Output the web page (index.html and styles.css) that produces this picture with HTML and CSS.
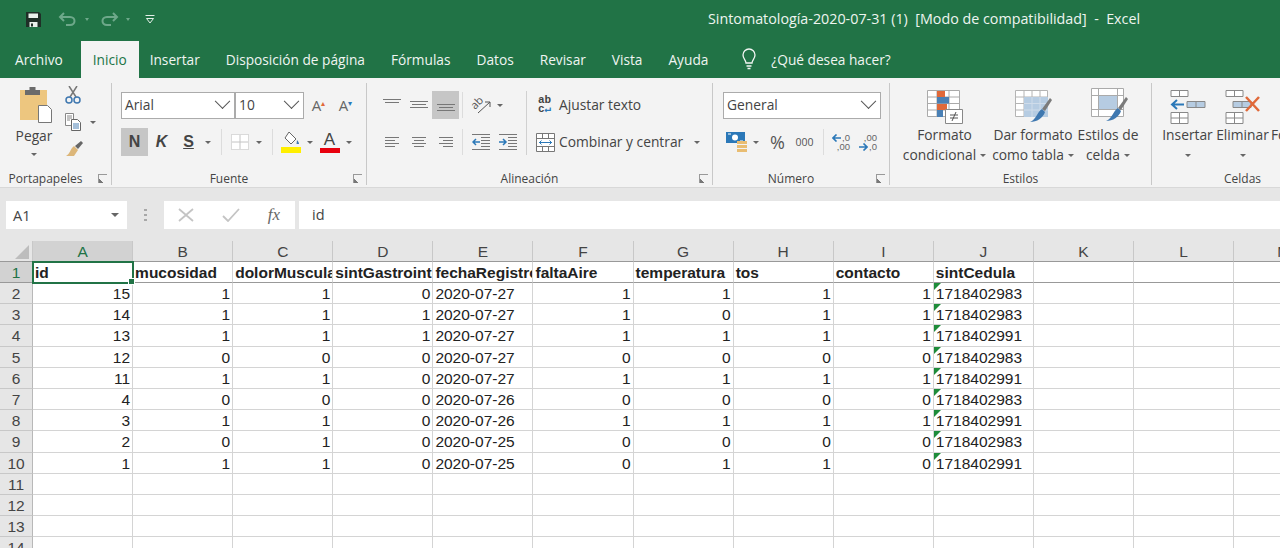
FILE: index.html
```html
<!DOCTYPE html>
<html>
<head>
  <meta charset="UTF-8">
  <title>Sintomatologia - Excel</title>
  <link rel="stylesheet" href="styles.css">
</head>
<body>
  <header class="titlebar">
    <div class="qat">
      <svg class="save" width="17" height="17" viewBox="0 0 17 17"><path d="M1 1h13l2 2v13H1z" fill="#1f2f27"/><path d="M3.500 2.500h9.500v4.500h-9.500z" fill="#e9f0eb"/><path d="M4.500 11h8v5h-8z" fill="#e9f0eb"/><path d="M6 12.500h2v3h-2z" fill="#1f2f27"/></svg>
      <svg class="undo" width="20" height="14" viewBox="0 0 20 14"><path d="M6 1L2 5l4 4M2 5h10c6 0 6 8 0 8H8" fill="none" stroke="#6ea88a" stroke-width="2"/></svg>
      <span class="qat-drop"></span>
      <svg class="redo" width="20" height="14" viewBox="0 0 20 14"><path d="M14 1l4 4-4 4M18 5H8c-6 0-6 8 0 8h4" fill="none" stroke="#6ea88a" stroke-width="2"/></svg>
      <span class="qat-drop"></span>
      <svg class="custom" width="10" height="9" viewBox="0 0 10 9"><path d="M.5.500h9M1.500 3.500h7L5 8z" fill="none" stroke="#e4efe8"/></svg>
    </div>
    <div class="doc-title">Sintomatología-2020-07-31 (1)&nbsp; [Modo de compatibilidad]&nbsp; -&nbsp; Excel</div>
  </header>

  <nav class="tabs">
    <a class="tab first">Archivo</a>
    <a class="tab active">Inicio</a>
    <a class="tab">Insertar</a>
    <a class="tab">Disposición de página</a>
    <a class="tab">Fórmulas</a>
    <a class="tab">Datos</a>
    <a class="tab">Revisar</a>
    <a class="tab">Vista</a>
    <a class="tab">Ayuda</a>
    <svg class="bulb" width="18" height="22" viewBox="0 0 18 22"><path d="M6 15c0-3-3-4-3-8a6 6 0 0 1 12 0c0 4-3 5-3 8zM6.500 18h5M7.500 20.500h3" fill="none" stroke="#f2f6f3" stroke-width="1.300"/></svg>
    <span class="tell">¿Qué desea hacer?</span>
  </nav>

  <section class="ribbon">
    <div class="group g-clip">
      <div class="body clip-body">
        <div class="paste">
          <svg width="33" height="36" viewBox="0 0 33 36"><path d="M0 3h27v30H0z" fill="#edc67f"/><path d="M5 3h4.500V0h6v3H20v5H5z" fill="#6b6b6b"/><path d="M18.500 18.500h9l4 4v13h-13z" fill="#fff" stroke="#777"/></svg>
          <span class="big-text">Pegar</span>
          <span class="drop"></span>
        </div>
        <div class="clip-tools">
          <svg width="16" height="18" viewBox="0 0 16 18"><path d="M4 0l7 11M12 0L5 11" stroke="#777" stroke-width="1.500" fill="none"/><circle cx="4" cy="14" r="3" fill="none" stroke="#3f78b0" stroke-width="1.500"/><circle cx="12" cy="14" r="3" fill="none" stroke="#3f78b0" stroke-width="1.500"/></svg>
          <div class="copy-line">
            <svg width="16" height="18" viewBox="0 0 16 18"><path d="M.5.500h8v12h-8z" fill="#fff" stroke="#888"/><path d="M2 3h5M2 5h5M2 7h3" stroke="#888"/><path d="M6.500 6.500h6l3 3v8h-9z" fill="#fff" stroke="#666"/><path d="M8 11h6M8 13h6M8 15h6" stroke="#4a80b5"/></svg>
            <span class="drop"></span>
          </div>
          <svg width="18" height="16" viewBox="0 0 18 16"><path d="M9 6l4 4-4 6H1c4-2 4-7 8-10z" fill="#dcb679"/><path d="M10 6l6-5 2 2-5 6z" fill="#666"/></svg>
        </div>
      </div>
      <div class="foot"><span class="foot-text">Portapapeles</span><span class="launch"></span></div>
    </div>

    <div class="group g-font">
      <div class="body">
        <div class="row">
          <div class="select font-name"><span>Arial</span><i class="chev"></i></div>
          <div class="select font-size"><span>10</span><i class="chev"></i></div>
          <span class="tool grow-a">A<sup>▴</sup></span>
          <span class="tool grow-a">A<sup class="blue">▾</sup></span>
        </div>
        <div class="row">
          <span class="tool bold on">N</span>
          <span class="tool bold ital">K</span>
          <span class="tool bold under">S</span>
          <span class="drop-w"><span class="drop"></span></span>
          <span class="sep"></span>
          <span class="tool"><svg width="18" height="16" viewBox="0 0 18 16"><path d="M.5.500h17v15H.500z" fill="#fff" stroke="#bbb" stroke-dasharray="1 1"/><path d="M9 1v14M1 8h16" stroke="#c4c4c4"/></svg></span>
          <span class="drop-w"><span class="drop"></span></span>
          <span class="sep"></span>
          <span class="tool"><svg width="20" height="22" viewBox="0 0 20 22"><path d="M8 1l7 7-5 5-6-6z" fill="#fff" stroke="#666"/><path d="M16 9c2 2 2 4 2 4h-2.500z" fill="#3f78b0"/><path d="M0 16h20v6H0z" fill="#ffef00"/></svg></span>
          <span class="drop-w"><span class="drop"></span></span>
          <span class="tool color-a">A</span>
          <span class="drop-w"><span class="drop"></span></span>
        </div>
      </div>
      <div class="foot"><span class="foot-text">Fuente</span><span class="launch"></span></div>
    </div>

    <div class="group g-align">
      <div class="body align-body">
        <div class="align-left">
          <div class="row">
            <span class="tool"><svg width="18" height="12" viewBox="0 0 18 12"><path d="M0 .500h18M2 3.500h14" stroke="#777"/></svg></span>
            <span class="tool"><svg width="18" height="12" viewBox="0 0 18 12"><path d="M0 2.500h18M2 5.500h14M0 8.500h18" stroke="#777"/></svg></span>
            <span class="tool on"><svg width="18" height="12" viewBox="0 0 18 12"><path d="M0 5.500h18M2 8.500h14M0 11.500h18" stroke="#777"/></svg></span>
            <span class="sep"></span>
            <span class="tool"><svg width="22" height="20" viewBox="0 0 22 20"><text class="orient" x="5" y="15" transform="rotate(-45 5 15)">ab</text><path d="M8 18L20 7M20 7v5M20 7h-5" stroke="#555" fill="none"/></svg></span>
            <span class="drop-w"><span class="drop"></span></span>
          </div>
          <div class="row">
            <span class="tool"><svg width="14" height="11" viewBox="0 0 14 11"><path d="M0 .500h14M0 3.500h10M0 6.500h14M0 9.500h10" stroke="#777"/></svg></span>
            <span class="tool"><svg width="14" height="11" viewBox="0 0 14 11"><path d="M0 .500h14M2 3.500h10M0 6.500h14M2 9.500h10" stroke="#777"/></svg></span>
            <span class="tool"><svg width="14" height="11" viewBox="0 0 14 11"><path d="M0 .500h14M4 3.500h10M0 6.500h14M4 9.500h10" stroke="#777"/></svg></span>
            <span class="sep"></span>
            <span class="tool"><svg width="18" height="16" viewBox="0 0 18 16"><path d="M0 .500h18M9 3.500h9M9 6.500h9M9 9.500h9M9 12.500h9M0 15.500h18" stroke="#777"/><path d="M8 8H1M4 5L1 8l3 3" stroke="#2b78b8" stroke-width="1.500" fill="none"/></svg></span>
            <span class="tool"><svg width="18" height="16" viewBox="0 0 18 16"><path d="M0 .500h18M9 3.500h9M9 6.500h9M9 9.500h9M9 12.500h9M0 15.500h18" stroke="#777"/><path d="M0 8h7M4 5l3 3-3 3" stroke="#2b78b8" stroke-width="1.500" fill="none"/></svg></span>
          </div>
        </div>
        <span class="sep tall"></span>
        <div class="align-right">
          <div class="row wide-row">
            <span class="wrap-ic"><b>ab</b><b>c<em>↵</em></b></span>
            <span class="label">Ajustar texto</span>
          </div>
          <div class="row wide-row">
            <span class="merge-ic"><svg width="19" height="19" viewBox="0 0 19 19"><path d="M.5.500h18v18H.500zM.5 5.500h18M.5 13.500h18M6.500.5v5M12.500.5v5M6.500 13.500v5M12.500 13.500v5" fill="#fff" stroke="#777"/><path d="M3 9.500h13M5.500 7.500l-2 2 2 2M13.500 7.500l2 2-2 2" fill="none" stroke="#2b78b8"/></svg></span>
            <span class="label">Combinar y centrar</span>
            <span class="drop-w merge-drop"><span class="drop"></span></span>
          </div>
        </div>
      </div>
      <div class="foot"><span class="foot-text">Alineación</span><span class="launch"></span></div>
    </div>

    <div class="group g-num">
      <div class="body">
        <div class="row">
          <div class="select num-format"><span>General</span><i class="chev"></i></div>
        </div>
        <div class="row">
          <span class="tool"><svg width="22" height="20" viewBox="0 0 22 20"><path d="M0 0h19v11H0z" fill="#2b78b8"/><circle cx="9" cy="5.500" r="3" fill="#fff"/><path d="M2 2h3M14 9h3" stroke="#fff"/><path d="M11 9h10v3H11zM11 13h10v3H11zM11 17h10v3H11z" fill="#e9bd72"/></svg></span>
          <span class="drop-w"><span class="drop"></span></span>
          <span class="tool percent">%</span>
          <span class="tool thousand">000</span>
          <span class="sep num-sep"></span>
          <span class="tool dec"><span class="dec-line"><svg width="9" height="8" viewBox="0 0 9 8"><path d="M9 4H1M4.500.5L1 4l3.500 3.500" fill="none" stroke="#2b78b8" stroke-width="1.600"/></svg>,0</span><span class="dec-line">,00</span></span>
          <span class="tool dec"><span class="dec-line">,00</span><span class="dec-line"><svg width="9" height="8" viewBox="0 0 9 8"><path d="M0 4h8M4.500.5L8 4 4.500 7.500" fill="none" stroke="#2b78b8" stroke-width="1.600"/></svg>,0</span></span>
        </div>
      </div>
      <div class="foot"><span class="foot-text">Número</span><span class="launch"></span></div>
    </div>

    <div class="group g-styles">
      <div class="body large-body">
        <div class="large w-cond">
          <svg width="36" height="36" viewBox="0 0 36 36"><path d="M.5.500h32v26H.500zM.5 7h32M.5 13.500h32M.5 20h32M10 .5v26M22 .5v26" fill="#fff" stroke="#aaa"/><path d="M10 1h8v6h-8zM10 14h10v6H10z" fill="#e0693a"/><path d="M10 7h12v6.500H10zM10 20h6v7h-6z" fill="#4a80b5"/><path d="M18.500 19.500h17v14h-17z" fill="#fff" stroke="#888"/><path d="M23 25h8M23 28h8M29 22l-4 9" stroke="#555" fill="none"/></svg>
          <span class="big-text">Formato</span>
          <span class="big-text">condicional<span class="drop in"></span></span>
        </div>
        <div class="large w-table">
          <svg width="37" height="36" viewBox="0 0 37 36"><path d="M.5.500h32v26H.500zM.5 7h32M.5 13.500h32M.5 20h32M9 .5v26M17 .5v26M25 .5v26" fill="#fff" stroke="#b4b4b4"/><path d="M9 7h24v20H9z" fill="#b6cce2"/><path d="M9 13.500h24M9 20h24M17 7v20M25 7v20" stroke="#cfdcea"/><path d="M27 19L35 8l2 2-7 11z" fill="#7b7b7b"/><path d="M27 19l3 3c-2 6-8 10-15 10 6-2 7-10 12-13z" fill="#3f78b0"/></svg>
          <span class="big-text">Dar formato</span>
          <span class="big-text">como tabla<span class="drop in"></span></span>
        </div>
        <div class="large w-cell">
          <svg class="cell-ic" width="38" height="36" viewBox="0 0 38 36"><path d="M.5.500h32v28H.500zM.5 7.500h32M.5 21.500h32M7.500.5v28M26.500.5v28" fill="#fff" stroke="#aaa"/><path d="M8 8h18v13H8z" fill="#b6cce2"/><path d="M27 20l8-11 2 2-7 11z" fill="#7b7b7b"/><path d="M27 20l3 3c-2 6-8 10-15 10 6-2 7-10 12-13z" fill="#3f78b0"/></svg>
          <span class="big-text">Estilos de</span>
          <span class="big-text">celda<span class="drop in"></span></span>
        </div>
      </div>
      <div class="foot"><span class="foot-text">Estilos</span></div>
    </div>

    <div class="group g-cells">
      <div class="body large-body">
        <div class="large w-ins">
          <svg width="36" height="36" viewBox="0 0 36 36"><path d="M1 .5h17v6H1zM9.500.5v6M1 22.500h17v11H1zM9.500 22.500v11M1 28h17" fill="#fff" stroke="#888"/><path d="M17 11.500h18v6H17zM26 11.500v6" fill="#b6cce2" stroke="#888"/><path d="M14 14.500H2M7 10l-5 4.500L7 19" fill="none" stroke="#2b78b8" stroke-width="2"/></svg>
          <span class="big-text">Insertar</span>
          <span class="drop"></span>
        </div>
        <div class="large w-del">
          <svg width="36" height="36" viewBox="0 0 36 36"><path d="M1 .5h17v6H1zM9.500.5v6M1 22.500h17v11H1zM9.500 22.500v11M1 28h17" fill="#fff" stroke="#888"/><path d="M8 11.500h18v6H8zM17 11.500v6" fill="#b6cce2" stroke="#888"/><path d="M21 7l13 14M34 7L21 21" stroke="#e0693a" stroke-width="2.500"/></svg>
          <span class="big-text">Eliminar</span>
          <span class="drop"></span>
        </div>
        <div class="large w-fmt"><span class="big-text cut">Formato</span></div>
      </div>
      <div class="foot cells-foot"><span class="foot-text">Celdas</span></div>
    </div>
  </section>

  <section class="formula">
    <div class="namebox"><span>A1</span><span class="drop"></span></div>
    <div class="grip"><i></i><i></i><i></i></div>
    <div class="fx-box">
      <svg width="16" height="14" viewBox="0 0 16 14"><path d="M1 1l14 12M15 1L1 13" stroke="#c4c4c4" stroke-width="1.800"/></svg>
      <svg width="18" height="14" viewBox="0 0 18 14"><path d="M1 8l5 5L17 1" fill="none" stroke="#c4c4c4" stroke-width="1.800"/></svg>
      <span class="fx">fx</span>
    </div>
    <div class="fbar">id</div>
  </section>

  <main class="sheet">
    <div class="corner"><i></i></div>
    <div class="ch sel">A</div><div class="ch">B</div><div class="ch">C</div><div class="ch">D</div><div class="ch">E</div><div class="ch">F</div><div class="ch">G</div><div class="ch">H</div><div class="ch">I</div><div class="ch">J</div><div class="ch">K</div><div class="ch">L</div><div class="ch">M</div>

    <div class="rh sel">1</div><div class="c head active-cell">id</div><div class="c head">mucosidad</div><div class="c head">dolorMuscular</div><div class="c head">sintGastrointestinal</div><div class="c head">fechaRegistro</div><div class="c head">faltaAire</div><div class="c head">temperatura</div><div class="c head">tos</div><div class="c head">contacto</div><div class="c head">sintCedula</div><div class="c head"></div><div class="c head"></div><div class="c head"></div>

    <div class="rh">2</div><div class="c n">15</div><div class="c n">1</div><div class="c n">1</div><div class="c n">0</div><div class="c">2020-07-27</div><div class="c n">1</div><div class="c n">1</div><div class="c n">1</div><div class="c n">1</div><div class="c t">1718402983</div><div class="c"></div><div class="c"></div><div class="c"></div>
    <div class="rh">3</div><div class="c n">14</div><div class="c n">1</div><div class="c n">1</div><div class="c n">1</div><div class="c">2020-07-27</div><div class="c n">1</div><div class="c n">0</div><div class="c n">1</div><div class="c n">1</div><div class="c t">1718402983</div><div class="c"></div><div class="c"></div><div class="c"></div>
    <div class="rh">4</div><div class="c n">13</div><div class="c n">1</div><div class="c n">1</div><div class="c n">1</div><div class="c">2020-07-27</div><div class="c n">1</div><div class="c n">1</div><div class="c n">1</div><div class="c n">1</div><div class="c t">1718402991</div><div class="c"></div><div class="c"></div><div class="c"></div>
    <div class="rh">5</div><div class="c n">12</div><div class="c n">0</div><div class="c n">0</div><div class="c n">0</div><div class="c">2020-07-27</div><div class="c n">0</div><div class="c n">0</div><div class="c n">0</div><div class="c n">0</div><div class="c t">1718402983</div><div class="c"></div><div class="c"></div><div class="c"></div>
    <div class="rh">6</div><div class="c n">11</div><div class="c n">1</div><div class="c n">1</div><div class="c n">0</div><div class="c">2020-07-27</div><div class="c n">1</div><div class="c n">1</div><div class="c n">1</div><div class="c n">1</div><div class="c t">1718402991</div><div class="c"></div><div class="c"></div><div class="c"></div>
    <div class="rh">7</div><div class="c n">4</div><div class="c n">0</div><div class="c n">0</div><div class="c n">0</div><div class="c">2020-07-26</div><div class="c n">0</div><div class="c n">0</div><div class="c n">0</div><div class="c n">0</div><div class="c t">1718402983</div><div class="c"></div><div class="c"></div><div class="c"></div>
    <div class="rh">8</div><div class="c n">3</div><div class="c n">1</div><div class="c n">1</div><div class="c n">0</div><div class="c">2020-07-26</div><div class="c n">1</div><div class="c n">1</div><div class="c n">1</div><div class="c n">1</div><div class="c t">1718402991</div><div class="c"></div><div class="c"></div><div class="c"></div>
    <div class="rh">9</div><div class="c n">2</div><div class="c n">0</div><div class="c n">1</div><div class="c n">0</div><div class="c">2020-07-25</div><div class="c n">0</div><div class="c n">0</div><div class="c n">0</div><div class="c n">0</div><div class="c t">1718402983</div><div class="c"></div><div class="c"></div><div class="c"></div>
    <div class="rh">10</div><div class="c n">1</div><div class="c n">1</div><div class="c n">1</div><div class="c n">0</div><div class="c">2020-07-25</div><div class="c n">0</div><div class="c n">1</div><div class="c n">1</div><div class="c n">0</div><div class="c t">1718402991</div><div class="c"></div><div class="c"></div><div class="c"></div>

    <div class="rh">11</div><div class="c"></div><div class="c"></div><div class="c"></div><div class="c"></div><div class="c"></div><div class="c"></div><div class="c"></div><div class="c"></div><div class="c"></div><div class="c"></div><div class="c"></div><div class="c"></div><div class="c"></div>
    <div class="rh">12</div><div class="c"></div><div class="c"></div><div class="c"></div><div class="c"></div><div class="c"></div><div class="c"></div><div class="c"></div><div class="c"></div><div class="c"></div><div class="c"></div><div class="c"></div><div class="c"></div><div class="c"></div>
    <div class="rh">13</div><div class="c"></div><div class="c"></div><div class="c"></div><div class="c"></div><div class="c"></div><div class="c"></div><div class="c"></div><div class="c"></div><div class="c"></div><div class="c"></div><div class="c"></div><div class="c"></div><div class="c"></div>
    <div class="rh">14</div><div class="c"></div><div class="c"></div><div class="c"></div><div class="c"></div><div class="c"></div><div class="c"></div><div class="c"></div><div class="c"></div><div class="c"></div><div class="c"></div><div class="c"></div><div class="c"></div><div class="c"></div>
  </main>
</body>
</html>
```

FILE: styles.css
```css
html, body {
  margin: 0;
  height: 548px;
  overflow: hidden;
}
body {
  width: 1280px;
  font-family: "Open Sans", sans-serif;
  font-size: 13.8px;
  color: #444;
  background-color: #fff;
}

/* title bar */
.titlebar {
  height: 41px;
  background-color: #217346;
  display: flex;
  color: #fff;
}
.qat {
  display: flex;
  align-items: center;
  height: 38px;
  padding-left: 25px;
  width: 708px;
  box-sizing: border-box;
}
.save { margin-right: 16px; }
.qat-drop {
  width: 0;
  height: 0;
  border: 2.5px solid transparent;
  border-top: 3px solid #6ea88a;
  margin: 2px 10px 0 7px;
}
.custom { margin-left: 5px; }
.doc-title {
  height: 38px;
  line-height: 38px;
  font-size: 14.3px;
  color: #eef5f0;
  white-space: nowrap;
}

/* tabs */
.tabs {
  height: 37px;
  background-color: #217346;
  display: flex;
  align-items: stretch;
  color: #f0f5f2;
  white-space: nowrap;
  font-size: 13.7px;
}
.tab {
  padding: 0 13px;
  line-height: 37px;
}
.tab.first { padding: 0 18px 0 15px; }
.tab.active {
  background-color: #f3f3f3;
  color: #217346;
  padding: 0 12px;
  margin-right: -2px;
}
.bulb { margin: 7px 13px 0 19px; }
.tell { line-height: 37px; }

/* ribbon */
.ribbon {
  height: 110px;
  box-sizing: border-box;
  padding-top: 5px;
  background-color: #f3f3f3;
  border-bottom: 1px solid #d8d8d8;
  display: flex;
  overflow: hidden;
}
.group {
  height: 102px;
  border-right: 1px solid #c8c8c8;
  box-sizing: border-box;
  display: flex;
  flex-direction: column;
  flex: none;
}
.g-clip { width: 112px; }
.g-font { width: 255px; }
.g-align { width: 346px; }
.g-num { width: 177px; }
.g-styles { width: 262px; }
.g-cells { width: 128px; border-right: none; }
.body {
  height: 87px;
  flex: none;
  display: flex;
  flex-direction: column;
  gap: 9px;
  padding-top: 8px;
  box-sizing: border-box;
}
.g-font .body { padding-left: 9px; }
.g-num .body { padding-left: 10px; }
.foot {
  height: 15px;
  flex: none;
  padding-top: 1px;
  display: flex;
  align-items: center;
  font-size: 12px;
}
.foot-text { flex: 1; text-align: center; }
.launch {
  width: 20px;
  height: 9px;
}
.launch::after {
  content: "";
  display: block;
  width: 8px;
  height: 8px;
  margin-left: 7px;
  border: 1px solid #999;
  border-width: 1px 0 0 1px;
  background: linear-gradient(45deg, #777 25%, transparent 26%);
}
.row {
  display: flex;
  align-items: center;
  height: 28px;
}
.tool {
  width: 27px;
  height: 28px;
  flex: none;
  display: flex;
  align-items: center;
  justify-content: center;
}
.tool.on { background-color: #c6c6c6; }
.drop-w {
  width: 12px;
  flex: none;
  display: flex;
  justify-content: center;
}
.drop {
  display: inline-block;
  width: 0;
  height: 0;
  border: 3px solid transparent;
  border-top: 3px solid #666;
  border-bottom: 0;
}
.drop.in { margin-left: 4px; vertical-align: middle; }
.sep {
  width: 1px;
  height: 26px;
  flex: none;
  background-color: #dcdcdc;
  margin: 0 4px 0 7px;
}
.sep.tall {
  height: 64px;
  background-color: #d0d0d0;
  margin: 0;
}

/* clipboard */
.clip-body {
  flex-direction: row;
  gap: 0;
  padding-top: 0;
}
.paste {
  width: 68px;
  padding-top: 4px;
  display: flex;
  flex-direction: column;
  align-items: center;
}
.paste svg { margin: 0 0 3px 5px; }
.paste .drop { margin-top: 7px; }
.big-text { white-space: nowrap; line-height: 19.5px; font-size: 13.8px; }
.clip-tools {
  display: flex;
  flex-direction: column;
  gap: 9px;
  margin-left: -3px;
  padding-top: 3px;
}
.copy-line {
  display: flex;
  align-items: center;
  gap: 9px;
}

/* font */
.select {
  height: 27px;
  box-sizing: border-box;
  background-color: #fff;
  border: 1px solid #ababab;
  display: flex;
  align-items: center;
  justify-content: space-between;
  padding: 0 6px 0 3px;
  flex: none;
}
.select span { padding-bottom: 1px; }
.font-name { width: 114px; }
.font-size { width: 69px; margin-right: 1px; }
.num-format { width: 158px; }
.chev {
  width: 10px;
  height: 10px;
  border: solid #555;
  border-width: 0 1px 1px 0;
  transform: rotate(45deg) translate(-3px, -3px);
}
.grow-a {
  font-size: 15px;
  color: #666;
}
.grow-a sup {
  font-size: 8px;
  margin-top: -6px;
  color: #e0693a;
}
.grow-a sup.blue { color: #2b78b8; }
.bold {
  font-family: "Liberation Sans", sans-serif;
  font-weight: bold;
  font-size: 16px;
}
.ital { font-style: italic; }
.under { text-decoration: underline; }
.color-a {
  font-family: "Liberation Sans", sans-serif;
  font-size: 17px;
  line-height: 16px;
  flex-direction: column;
}
.color-a::after {
  content: "";
  width: 20px;
  height: 5px;
  background-color: #e8000d;
}

/* alignment */
.g-align .body { padding-left: 11px; }
.align-body {
  flex-direction: row;
  gap: 0;
}
.align-left {
  width: 148px;
  display: flex;
  flex-direction: column;
  gap: 9px;
}
.g-align .sep { margin: 0 4px 0 3px; }
.g-align .sep.tall { margin: 0; }
.orient {
  font-family: "Open Sans", sans-serif;
  font-size: 11px;
  fill: #555;
}
.align-right {
  display: flex;
  flex-direction: column;
  gap: 9px;
}
.wide-row { white-space: nowrap; }
.label { padding-bottom: 2px; }
.wrap-ic {
  width: 32px;
  padding-left: 11px;
  box-sizing: border-box;
  display: flex;
  flex-direction: column;
  font-family: "Liberation Mono", monospace;
  font-size: 11px;
  line-height: 9px;
}
.wrap-ic em { font-style: normal; color: #2b78b8; }
.merge-ic {
  width: 32px;
  padding-left: 9px;
  box-sizing: border-box;
  display: flex;
}
.merge-drop { margin-left: 8px; }

/* number */
.percent { font-size: 18px; color: #555; }
.thousand { font-size: 10.500px; color: #555; }
.num-sep { margin: 0 5px; }
.g-num .drop-w + .tool { margin-left: 2px; }
.dec {
  flex-direction: column;
  align-items: flex-end;
  padding-right: 6px;
  box-sizing: border-box;
  font-family: "Liberation Sans", sans-serif;
  font-size: 9.500px;
  line-height: 9px;
  color: #666;
}
.dec-line {
  display: flex;
  align-items: center;
  gap: 1px;
}

/* large buttons */
.large-body {
  flex-direction: row;
  gap: 0;
  padding-top: 7px;
}
.large {
  display: flex;
  flex-direction: column;
  align-items: center;
  flex: none;
}
.large svg { margin-bottom: -1px; }
.large svg.cell-ic { margin: -2px 0 1px 3px; }
.w-cond { width: 91px; margin-left: 9px; }
.w-table { width: 86px; }
.w-cell { width: 64px; }
.w-ins { width: 53px; margin-left: 9px; }
.w-del { width: 57px; }
.w-fmt { width: 40px; padding-top: 35px; align-items: flex-start; }
.large .drop { margin-top: 9px; }
.large .drop.in { margin-top: 0; }
.cells-foot { padding-left: 72px; }
.cells-foot .foot-text { flex: none; }

/* formula bar */
.formula {
  height: 53px;
  background-color: #e6e6e6;
  box-sizing: border-box;
  padding-top: 13px;
  display: flex;
  align-items: flex-start;
  font-size: 14.5px;
}
.namebox {
  width: 121px;
  height: 28px;
  margin-left: 6px;
  box-sizing: border-box;
  background-color: #fff;
  padding: 0 8px 0 7px;
  display: flex;
  align-items: center;
  justify-content: space-between;
}
.namebox .drop { border-width: 4px 4px 0; }
.grip {
  width: 37px;
  height: 28px;
  display: flex;
  flex-direction: column;
  align-items: center;
  justify-content: center;
  gap: 3px;
}
.grip i {
  width: 3px;
  height: 2px;
  background-color: #a8a8a8;
}
.fx-box {
  width: 131px;
  height: 28px;
  box-sizing: border-box;
  background-color: #fff;
  padding: 0 15px 0 14px;
  display: flex;
  align-items: center;
  justify-content: space-between;
}
.fx {
  font-family: "Liberation Serif", serif;
  font-style: italic;
  font-size: 17px;
  color: #666;
}
.fbar {
  flex: 1;
  height: 28px;
  line-height: 28px;
  margin-left: 4px;
  padding-left: 13px;
  background-color: #fff;
}

/* sheet */
.sheet {
  display: grid;
  grid-template-columns: 33px repeat(13, 100.1px);
  grid-template-rows: 21px 21px repeat(12, 21.2px);
  font-family: "Liberation Sans", sans-serif;
  font-size: 15.5px;
  color: #222;
}
.corner {
  background-color: #e6e6e6;
  border-right: 1px solid #c8c8c8;
  border-bottom: 1px solid #999;
  box-sizing: border-box;
  display: flex;
  align-items: flex-end;
  justify-content: flex-end;
  padding: 0 3px 2px 0;
}
.corner i {
  width: 0;
  height: 0;
  border-left: 14px solid transparent;
  border-bottom: 14px solid #bdbdbd;
}
.ch, .rh {
  background-color: #e6e6e6;
  color: #444;
  text-align: center;
  box-sizing: border-box;
  line-height: 21px;
  min-width: 0;
}
.ch {
  border-right: 1px solid #c8c8c8;
  border-bottom: 1px solid #999;
}
.rh {
  border-right: 1px solid #b8b8b8;
  border-bottom: 1px solid #c8c8c8;
}
.ch.sel, .rh.sel {
  background-color: #d2d2d2;
  color: #217346;
}
.c {
  box-sizing: border-box;
  border-right: 1px solid #d4d4d4;
  border-bottom: 1px solid #d4d4d4;
  padding: 0 2px;
  line-height: 21px;
  white-space: nowrap;
  overflow: hidden;
  min-width: 0;
  position: relative;
}
.c.n { text-align: right; }
.c.head {
  font-weight: bold;
  border-bottom-color: #999;
}
.rh.sel { border-bottom-color: #999; }
.c.t::before {
  content: "";
  position: absolute;
  top: 0;
  left: 0;
  border-top: 7px solid #1e8c3a;
  border-right: 7px solid transparent;
}
.active-cell {
  overflow: visible;
  outline: 2px solid #217346;
  outline-offset: -1px;
  z-index: 1;
}
.active-cell::after {
  content: "";
  position: absolute;
  right: -3px;
  bottom: -3px;
  width: 5px;
  height: 5px;
  background-color: #217346;
  border: 1px solid #fff;
}
```
